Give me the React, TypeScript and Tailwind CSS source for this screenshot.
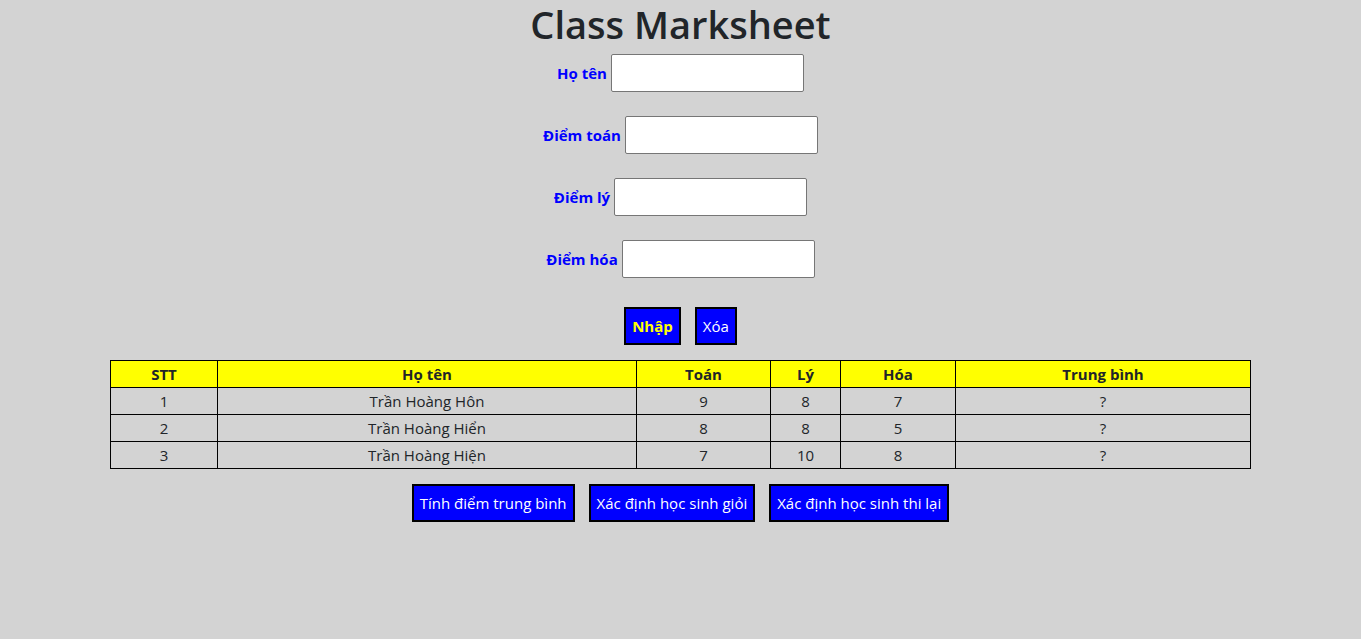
const rows = [
  { stt: 1, name: "Trần Hoàng Hôn", toan: 9, ly: 8, hoa: 7 },
  { stt: 2, name: "Trần Hoàng Hiển", toan: 8, ly: 8, hoa: 5 },
  { stt: 3, name: "Trần Hoàng Hiện", toan: 7, ly: 10, hoa: 8 },
];

const fields = ["Họ tên", "Điểm toán", "Điểm lý", "Điểm hóa"];

export default function App() {
  return (
    <main className="min-h-[639px] bg-[#d3d3d3] text-[#212529] font-['Open_Sans',sans-serif] text-[15px]">
      <h1 className="text-center text-[38px] font-semibold leading-[48px]">Class Marksheet</h1>

      {/* Input form */}
      <div className="mt-[6px] flex flex-col items-center gap-6">
        {fields.map((f) => (
          <div key={f} className="flex items-center gap-1">
            <label className="font-bold text-[#0000ff]">{f}</label>
            <input className="h-[38px] w-[193px] rounded-[2px] border border-[#767676] bg-white" />
          </div>
        ))}
      </div>

      <div className="mt-[29px] flex justify-center gap-[14px]">
        <button className="h-[38px] border-2 border-black bg-[#0000ff] px-[6px] font-bold text-[#ffff00]">Nhập</button>
        <button className="h-[38px] border-2 border-black bg-[#0000ff] px-[6px] text-white">Xóa</button>
      </div>

      {/* Marks table */}
      <table className="mx-auto mt-[15px] w-[1140px] table-fixed border-collapse text-center">
        <colgroup>
          <col className="w-[107px]" />
          <col className="w-[419px]" />
          <col className="w-[134px]" />
          <col className="w-[70px]" />
          <col className="w-[115px]" />
          <col className="w-[295px]" />
        </colgroup>
        <thead>
          <tr className="h-[27px] bg-[#ffff00] font-bold">
            <th className="border border-black">STT</th>
            <th className="border border-black">Họ tên</th>
            <th className="border border-black">Toán</th>
            <th className="border border-black">Lý</th>
            <th className="border border-black">Hóa</th>
            <th className="border border-black">Trung bình</th>
          </tr>
        </thead>
        <tbody>
          {rows.map((r) => (
            <tr key={r.stt} className="h-[27px]">
              <td className="border border-black">{r.stt}</td>
              <td className="border border-black">{r.name}</td>
              <td className="border border-black">{r.toan}</td>
              <td className="border border-black">{r.ly}</td>
              <td className="border border-black">{r.hoa}</td>
              <td className="border border-black">?</td>
            </tr>
          ))}
        </tbody>
      </table>

      <div className="mt-[15px] flex justify-center gap-[14px]">
        <button className="h-[38px] border-2 border-black bg-[#0000ff] px-[6px] text-white">Tính điểm trung bình</button>
        <button className="h-[38px] border-2 border-black bg-[#0000ff] px-[6px] text-white">Xác định học sinh giỏi</button>
        <button className="h-[38px] border-2 border-black bg-[#0000ff] px-[6px] text-white">Xác định học sinh thi lại</button>
      </div>
    </main>
  );
}
